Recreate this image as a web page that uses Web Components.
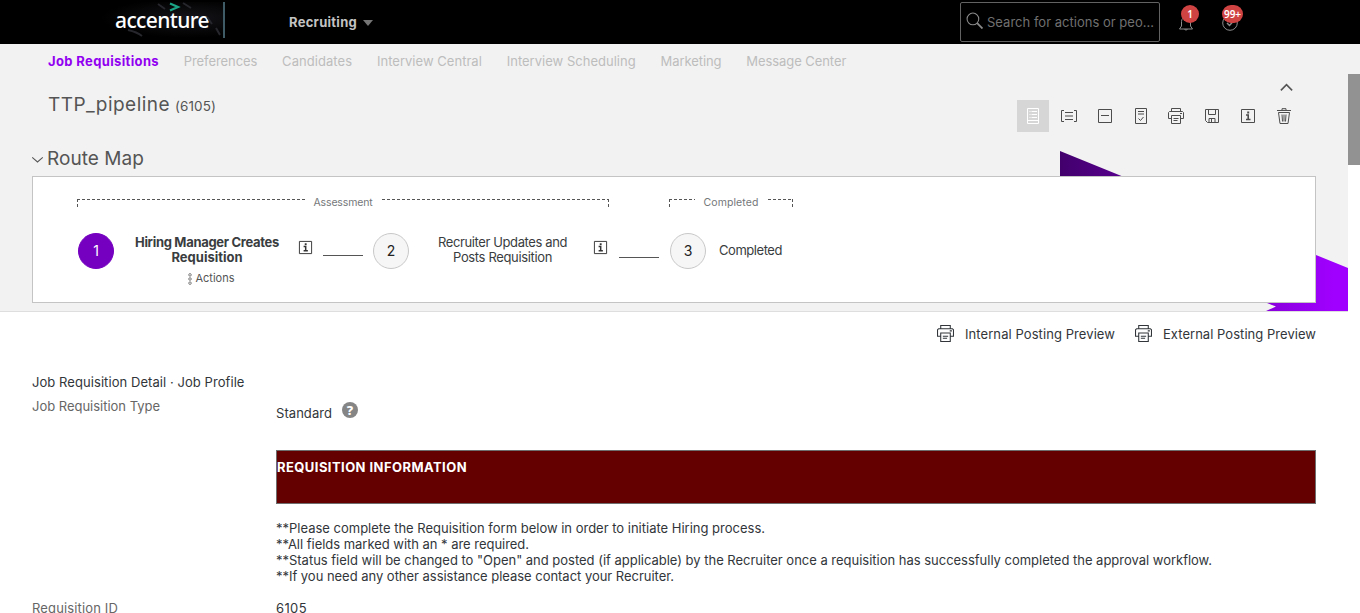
<!DOCTYPE html>
<html lang="en"><head><meta charset="utf-8"><title>TTP_pipeline</title>
<style>
body{margin:0;width:1360px;height:613px;overflow:hidden;font:13px/16px Inter,Roboto,"Liberation Sans",sans-serif;color:#32363a;background:#fff}
</style></head><body><req-app></req-app>
<script>
const BASE='<style>*{box-sizing:border-box}:host{box-sizing:border-box}svg{display:block}</style>';
function define(name,html,ready){
  const t=document.createElement('template');t.innerHTML=BASE+html;
  customElements.define(name,class extends HTMLElement{
    constructor(){super();this.attachShadow({mode:'open'}).append(t.content.cloneNode(true));}
    connectedCallback(){if(ready)ready(this,this.shadowRoot);}
  });
}
/* A single-line label tracked to a given width */
define('fit-text','<style>:host{display:inline-block;white-space:nowrap;flex:none}</style><slot></slot>',h=>{
  const w=+h.getAttribute('w');if(!w)return;
  h.style.letterSpacing='0px';
  h.style.letterSpacing=((w-h.getBoundingClientRect().width)/h.textContent.length)+'px';
});
const ICONS={
 list:'<path d="M2.500.500h11v15h-11zM4.500 3.500h1M6.500 3.500h5.500M4.500 6.500h1M6.500 6.500h5.500M4.500 9.500h1M6.500 9.500h5.500M2.500 12.500h11"/>',
 bracket:'<path d="M3 2.500H.500v11H3M13 2.500h2.500v11H13M4 4.500h8M4 8h8M4 11.500h8"/>',
 minus:'<path d="M1.500 1.500h13v13h-13zM4 7.500h8"/>',
 task:'<path d="M2.500.500h11v15h-11zM5 3.500h6M5 6h6M5.500 10.500l2 2 3-3.500"/>',
 print:'<path d="M3.500 3.500v-3h9v3M3.500 10.500H.500v-6l1-1h13l1 1v6h-3M12 5.500h2M3.500 7.500h9v8h-9zM5.500 10.500h5M5.500 12.500h4"/>',
 save:'<path d="M1.500 1.500h13v13h-11l-2-2zM4.500 1.500v5h7v-5M5 14.500v-4h6v4M7.500 11v3"/>',
 info:'<path d="M1.500 1.500h13v13h-13z"/><path d="M6 7H8.200v4.500M6 11.500h4.500" stroke-width="1.600"/><path d="M7.200 3.500h2v2h-2z" fill="currentColor" stroke="none"/>',
 trash:'<path d="M1 2.500h14M6 2V.700h4V2M2.500 4.500h11l-1.500 11H4zM6 6.500l.5 7M8 6.500v7M10 6.500l-.5 7"/>',
 bell:'<path d="M3.500 11V6.500a4 4 0 0 1 9 0V11l2 3h-13zM6.500 14.500q1.500 1 3 0"/>',
 check:'<circle cx="8" cy="8" r="7.300"/><path d="M5 8l2.500 2.500L11.500 6" stroke-width="1.500"/>',
 search:'<circle cx="6.500" cy="6.500" r="5.500"/><path d="M10.500 10.500l5 5" stroke-width="1.700"/>',
 up:'<path d="M2 11l6-6 6 6" stroke-width="1.700"/>',
 down:'<path d="M1.500 5.500l6.500 5.500 6.500-5.500" stroke-width="1.300"/>',
 dots:'<circle cx="8" cy="2.500" r="1.700"/><circle cx="8" cy="8" r="1.700"/><circle cx="8" cy="13.500" r="1.700"/>'
};
define('ui-icon','<style>:host{display:inline-block;flex:none}svg{width:var(--s,16px);height:var(--s,16px);flex:none}</style><svg viewBox="0 0 16 16" fill="none" stroke="currentColor" stroke-width="1"></svg>',(h,r)=>{r.querySelector('svg').innerHTML=ICONS[h.getAttribute('name')]});

define('accenture-logo',`<style>:host{display:block;width:125px;height:36px;border-right:2px solid #3e5b66;background:radial-gradient(ellipse at 72% 45%,#15151a,#000 70%);position:relative;color:#fff;overflow:hidden}
fit-text{font:500 21px/24px "Noto Sans","Open Sans",sans-serif;margin:6px 0 0 15px}
svg{position:absolute;inset:0}</style>
<svg width="125" height="36" fill="none"><path d="M83 1l8 5M107 15l5 7M116 26l4 7M28 28q9 2 14 6M58 2l7 5" stroke="#26262d" stroke-width="2"/><path d="M70 1.500l8 3.500-8 3.500" stroke="#1ba586" stroke-width="2.200"/></svg><fit-text w="94">accenture</fit-text>`);
define('count-badge','<style>:host{position:absolute;height:18px;min-width:18px;border-radius:9px;background:#d04343;color:#fff;font:600 10px/18px "Noto Sans",sans-serif;text-align:center;white-space:nowrap}</style><slot></slot>');
define('top-bar',`<style>:host{display:flex;height:44px;background:#000;padding:2px 0 0 100px;align-items:flex-start}
.menu{display:flex;align-items:center;gap:6px;margin:12px 0 0 64px;font-weight:700;color:#c3c3c3}
.tri{border:5px solid transparent;border-top:6px solid #757575;border-bottom:0;margin-top:1px}
.search{margin-left:auto;width:200px;height:40px;border:1px solid #626262;border-radius:2px;display:flex;align-items:center;padding:0 5px;gap:4px}
.search ui-icon{margin-top:-4px;color:#8b8b8b}.search fit-text{color:#707070}
.n{position:relative;margin:13px 0 0 18px;width:16px;height:16px;color:#8c8c8c}.n+.n{margin:13px 122px 0 28px}
</style><accenture-logo></accenture-logo><div class="menu"><fit-text w="68">Recruiting</fit-text><span class="tri"></span></div>
<div class="search"><ui-icon name="search" style="--s:17px"></ui-icon><fit-text w="167">Search for actions or peo...</fit-text></div>
<div class="n"><ui-icon name="bell"></ui-icon><count-badge style="left:3px;top:-10px">1</count-badge></div>
<div class="n"><ui-icon name="check"></ui-icon><count-badge style="left:0;top:-10px;width:21px">99+</count-badge></div>`);
define('module-nav',`<style>:host{display:flex;height:30px;background:#f2f2f2;padding:9px 0 0 48px;gap:24.800px;color:#bdbdbd}
b{color:#9100f0}</style><b><fit-text w="111">Job Requisitions</fit-text></b><fit-text w="73.500">Preferences</fit-text><fit-text w="70">Candidates</fit-text><fit-text w="105">Interview Central</fit-text><fit-text w="129">Interview Scheduling</fit-text><fit-text w="61">Marketing</fit-text><fit-text w="100">Message Center</fit-text>`);
define('step-circle','<style>:host{display:flex;width:36px;height:36px;flex:none;border-radius:50%;border:1px solid #c8c8c8;background:#f6f6f6;align-items:center;justify-content:center;color:#222;font-size:14px}:host([on]){background:#7500c0;border-color:#7500c0;color:#fff}</style><slot></slot>');
define('step-group',`<style>:host{display:flex;height:18px;color:#74777a;font-size:10.500px;gap:9px;line-height:12px}
i{flex:1;height:9px;margin-top:2px;display:block;background:repeating-linear-gradient(90deg,#555 0 3px,transparent 3px 5px) 0 0/100% 1px no-repeat,repeating-linear-gradient(#555 0 3px,transparent 3px 5px) var(--x)/1px 100% no-repeat}
.l{--x:0 0}.r{--x:100% 0}</style><i class="l"></i><slot></slot><i class="r"></i>`);
define('route-map',`<style>:host{display:block;height:127px;margin:0 32px;background:#fff;border:1px solid #c4c4c4;position:relative;padding:20px 0 0 44px;color:#3a3d40}
.g{display:flex;gap:60px;height:18px}.row{display:flex;margin-left:1px;padding-top:18px;height:80px}
.t{text-align:center;line-height:15px;margin-top:2px;display:flex;flex-direction:column;align-items:center}
.info{--s:15px;margin-top:7px;color:#333}.line{width:40px;height:1px;background:#555;flex:none}
.act{display:flex;gap:3px;font-size:11px;color:#555;margin-top:6px;align-items:center;--s:12px}
b fit-text{display:block;text-align:center}.act ui-icon{margin-left:7px;width:6px;display:flex;justify-content:center}</style>
<div class="g"><step-group style="width:532px"><fit-text w="59">Assessment</fit-text></step-group><step-group style="width:124px"><fit-text w="55">Completed</fit-text></step-group></div>
<div class="row"><step-circle on style="margin-right:21px">1</step-circle>
<div class="t"><b><fit-text w="144">Hiring Manager Creates</fit-text></b><b><fit-text w="71">Requisition</fit-text></b><span class="act"><ui-icon name="dots"></ui-icon><fit-text w="39">Actions</fit-text></span></div>
<ui-icon class="info" name="info" style="margin-left:19px"></ui-icon><span class="line" style="margin:22px 10px 0"></span>
<step-circle style="margin-right:29px">2</step-circle><div class="t"><fit-text w="129">Recruiter Updates and</fit-text><fit-text w="99">Posts Requisition</fit-text></div>
<ui-icon class="info" name="info" style="margin-left:26px"></ui-icon><span class="line" style="margin:24px 11px 0"></span><step-circle>3</step-circle><fit-text w="63" style="margin:9px 0 0 13px">Completed</fit-text></div>`);
define('icon-toolbar',`<style>:host{display:flex;gap:3.860px;color:#4d4d4d}span{width:32px;height:32px;display:flex;align-items:center;justify-content:center}.on{background:#d6d6d6;color:#fff}</style>
<span class="on"><ui-icon name="list"></ui-icon></span>`+['bracket','minus','task','print','save','info','trash'].map(n=>`<span><ui-icon name="${n}"></ui-icon></span>`).join(''));
define('req-header',`<style>:host{display:block;height:238px;background:#f2f2f2;border-bottom:1px solid #dedede;position:relative;color:#555}
.bg{position:absolute;left:1060px;top:77px}
.top{display:flex;height:71px;padding:20px 48px 0;position:relative}
.title{display:flex;align-items:baseline;gap:5px;font-size:19px;line-height:22px;height:24px}
.title .id{font-size:13.500px}.tools{margin-left:auto;display:flex;flex-direction:column;align-items:flex-end;margin-top:-15px}
.tools>ui-icon{--s:15px;margin:1px 6px 4px 0;height:16px}
h2{position:relative;margin:0;height:31px;padding:0 0 3px 31px;display:flex;align-items:center;gap:3px;font-size:19px;font-weight:400}h2 ui-icon{--s:13px;margin-top:1px}</style>
<svg class="bg" width="288" height="160"><defs><linearGradient id="g"><stop stop-color="#42006c"/><stop offset=".95" stop-color="#a000ff"/></linearGradient></defs><path d="M0 0L288 117V160H206L216 155.500L207 152L0 70z" fill="url(#g)"/></svg>
<div class="top"><div class="title"><fit-text w="122">TTP_pipeline</fit-text><fit-text class="id" w="41">(6105)</fit-text></div>
<div class="tools"><ui-icon name="up"></ui-icon><icon-toolbar></icon-toolbar></div></div>
<h2><ui-icon name="down"></ui-icon><fit-text w="97">Route Map</fit-text></h2><route-map></route-map>`);
define('preview-link','<style>:host{display:flex;align-items:center}ui-icon{--s:17px;margin:-2px 11px 0 0}</style><ui-icon name="print"></ui-icon><slot></slot>');
define('req-detail',`<style>:host{display:block;padding:14px 32px 0}
.links{display:flex;justify-content:flex-end;gap:20px;height:48px;align-items:flex-start}
.grid{display:grid;grid-template-columns:244px 1fr}.lab{color:#666}
.q{display:inline-flex;width:16px;height:16px;border-radius:50%;background:#858585;color:#fff;font:800 13px/16px "Noto Sans",sans-serif;justify-content:center}
.std{display:flex;gap:10px;padding-top:7px;height:52px}.std .q{margin-top:-3px}
.ban{height:54px;border:1px solid #6e6e6e;background:#640000;color:#fff;font-weight:700;padding:8px 0 0}
.notes{display:flex;flex-direction:column;align-items:flex-start;margin:16px 0}
</style><div class="links"><preview-link><fit-text w="150">Internal Posting Preview</fit-text></preview-link><preview-link><fit-text w="153">External Posting Preview</fit-text></preview-link></div>
<div style="height:24px"><fit-text w="212.500">Job Requisition Detail · Job Profile</fit-text></div>
<div class="grid"><div class="lab"><fit-text w="128">Job Requisition Type</fit-text></div><div><div class="std"><fit-text w="56">Standard</fit-text><span class="q">?</span></div>
<div class="ban"><fit-text w="190">REQUISITION INFORMATION</fit-text></div>
<div class="notes"><fit-text w="489">**Please complete the Requisition form below in order to initiate Hiring process.</fit-text><fit-text w="253">**All fields marked with an * are required.</fit-text><fit-text w="936">**Status field will be changed to "Open" and posted (if applicable) by the Recruiter once a requisition has successfully completed the approval workflow.</fit-text><fit-text w="398">**If you need any other assistance please contact your Recruiter.</fit-text></div></div>
<div class="lab"><fit-text w="86">Requisition ID</fit-text></div><fit-text w="31" style="justify-self:start">6105</fit-text></div>`);
define('scroll-bar','<style>:host{display:block;width:12px;background:#fff}div{height:91px;background:#929292}</style><div></div>');
define('req-app',`<style>:host{display:flex;flex-direction:column;height:613px;overflow:hidden}.view{display:flex;flex:1;min-height:0}.page{width:1348px;overflow:hidden}</style><top-bar></top-bar><module-nav></module-nav><div class="view"><div class="page"><req-header></req-header><req-detail></req-detail></div><scroll-bar></scroll-bar></div>`);
</script></body></html>
